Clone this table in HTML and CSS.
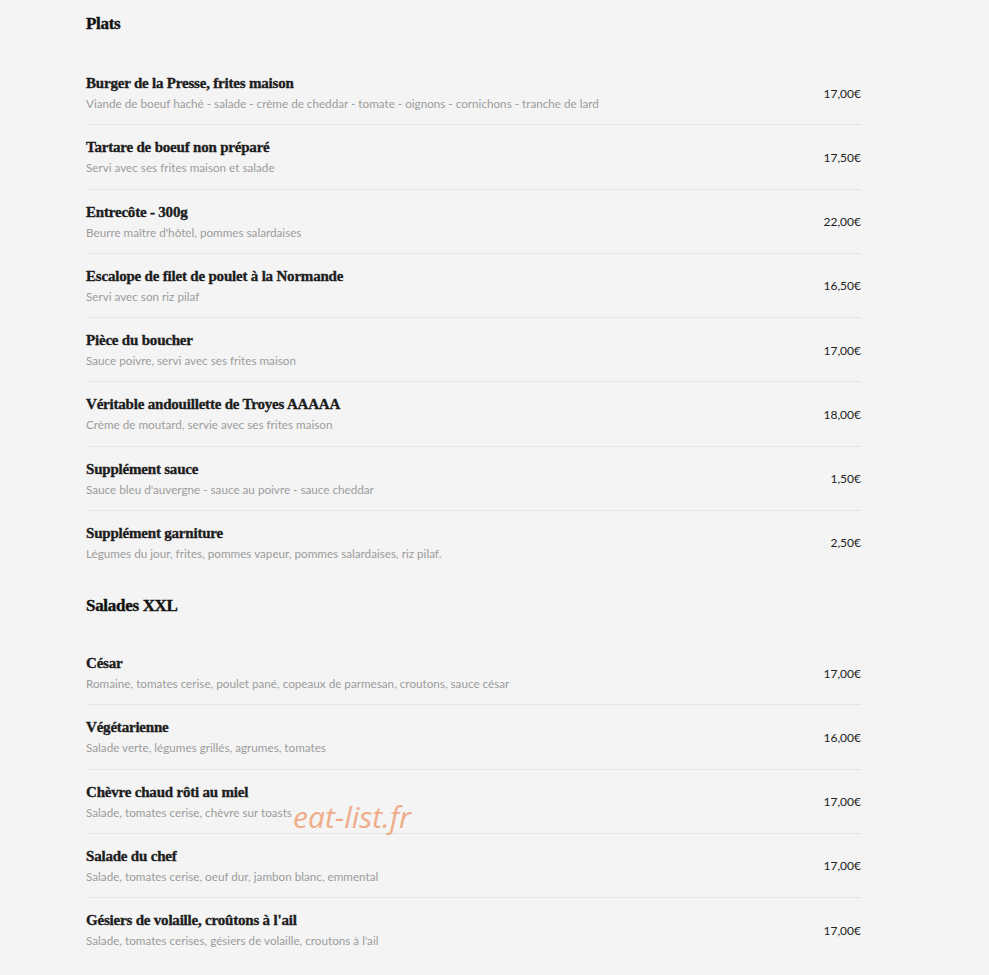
FILE: index.html
```html
<!DOCTYPE html>
<html lang="fr">
<head>
    <meta charset="UTF-8">
    <title>Carte - Plats et Salades</title>
    <link rel="stylesheet" href="styles.css">
</head>
<body>

<div class="menu">
    <!-- Plats -->
    <h2 class="menu-section">Plats</h2>
    <div class="menu-list">
        <div class="menu-item">
            <div class="item-text">
                <div class="item-name">Burger de la Presse, frites maison</div>
                <div class="item-desc">Viande de boeuf haché - salade - crème de cheddar - tomate - oignons - cornichons - tranche de lard</div>
            </div>
            <div class="item-price">17,00€</div>
        </div>
        <div class="menu-item">
            <div class="item-text">
                <div class="item-name">Tartare de boeuf non préparé</div>
                <div class="item-desc">Servi avec ses frites maison et salade</div>
            </div>
            <div class="item-price">17,50€</div>
        </div>
        <div class="menu-item">
            <div class="item-text">
                <div class="item-name">Entrecôte - 300g</div>
                <div class="item-desc">Beurre maître d'hôtel, pommes salardaises</div>
            </div>
            <div class="item-price">22,00€</div>
        </div>
        <div class="menu-item">
            <div class="item-text">
                <div class="item-name">Escalope de filet de poulet à la Normande</div>
                <div class="item-desc">Servi avec son riz pilaf</div>
            </div>
            <div class="item-price">16,50€</div>
        </div>
        <div class="menu-item">
            <div class="item-text">
                <div class="item-name">Pièce du boucher</div>
                <div class="item-desc">Sauce poivre, servi avec ses frites maison</div>
            </div>
            <div class="item-price">17,00€</div>
        </div>
        <div class="menu-item">
            <div class="item-text">
                <div class="item-name">Véritable andouillette de Troyes AAAAA</div>
                <div class="item-desc">Crème de moutard, servie avec ses frites maison</div>
            </div>
            <div class="item-price">18,00€</div>
        </div>
        <div class="menu-item">
            <div class="item-text">
                <div class="item-name">Supplément sauce</div>
                <div class="item-desc">Sauce bleu d'auvergne - sauce au poivre - sauce cheddar</div>
            </div>
            <div class="item-price">1,50€</div>
        </div>
        <div class="menu-item">
            <div class="item-text">
                <div class="item-name">Supplément garniture</div>
                <div class="item-desc">Légumes du jour, frites, pommes vapeur, pommes salardaises, riz pilaf.</div>
            </div>
            <div class="item-price">2,50€</div>
        </div>
    </div>

    <!-- Salades XXL -->
    <h2 class="menu-section">Salades XXL</h2>
    <div class="menu-list">
        <div class="menu-item">
            <div class="item-text">
                <div class="item-name">César</div>
                <div class="item-desc">Romaine, tomates cerise, poulet pané, copeaux de parmesan, croutons, sauce césar</div>
            </div>
            <div class="item-price">17,00€</div>
        </div>
        <div class="menu-item">
            <div class="item-text">
                <div class="item-name">Végétarienne</div>
                <div class="item-desc">Salade verte, légumes grillés, agrumes, tomates</div>
            </div>
            <div class="item-price">16,00€</div>
        </div>
        <div class="menu-item">
            <div class="item-text">
                <div class="item-name">Chèvre chaud rôti au miel</div>
                <div class="item-desc">Salade, tomates cerise, chèvre sur toasts</div>
            </div>
            <div class="item-price">17,00€</div>
        </div>
        <div class="menu-item">
            <div class="item-text">
                <div class="item-name">Salade du chef</div>
                <div class="item-desc">Salade, tomates cerise, oeuf dur, jambon blanc, emmental</div>
            </div>
            <div class="item-price">17,00€</div>
        </div>
        <div class="menu-item">
            <div class="item-text">
                <div class="item-name">Gésiers de volaille, croûtons à l'ail</div>
                <div class="item-desc">Salade, tomates cerises, gésiers de volaille, croutons à l'ail</div>
            </div>
            <div class="item-price">17,00€</div>
        </div>
    </div>
</div>

<!-- Watermark -->
<div class="watermark">eat-list.fr</div>

</body>
</html>
```

FILE: styles.css
```css
body {
    margin: 0;
    padding: 0;
    background-color: #f4f4f4;
    font-family: Lato, "Open Sans", sans-serif;
    position: relative;
}

.menu {
    width: 775px;
    margin-left: 86px;
    padding-top: 14px;
}

.menu-section {
    font-family: "Liberation Serif", serif;
    font-size: 17px;
    font-weight: bold;
    letter-spacing: -0.3px;
    line-height: 20px;
    color: #111;
    -webkit-text-stroke: 0.4px #111; /* heavier display weight */
    margin: 22px 0 25px;
}

.menu-section:first-child {
    margin-top: 0;
    margin-bottom: 27px;
}

.menu-item {
    display: flex;
    align-items: center;
    justify-content: space-between;
    padding: 12px 0 11.25px;
    border-bottom: 1px dotted #d8d8d8;
}

.menu-item:last-child {
    border-bottom: none;
}

.item-name {
    font-family: "Liberation Serif", serif;
    font-size: 15px;
    font-weight: bold;
    letter-spacing: -0.2px;
    line-height: 20px;
    color: #1d1d1d;
    -webkit-text-stroke: 0.35px #1d1d1d;
}

.item-desc {
    font-size: 11.7px;
    line-height: 19px;
    margin-top: 1px;
    color: #9c9c9c;
}

.item-price {
    font-size: 12px;
    color: #222;
}

/* Watermark over the page */
.watermark {
    position: absolute;
    left: 293px;
    top: 796px;
    font-family: "Open Sans", sans-serif;
    font-style: italic;
    font-size: 30px;
    color: #eea57e;
    opacity: 0.9;
}
```
